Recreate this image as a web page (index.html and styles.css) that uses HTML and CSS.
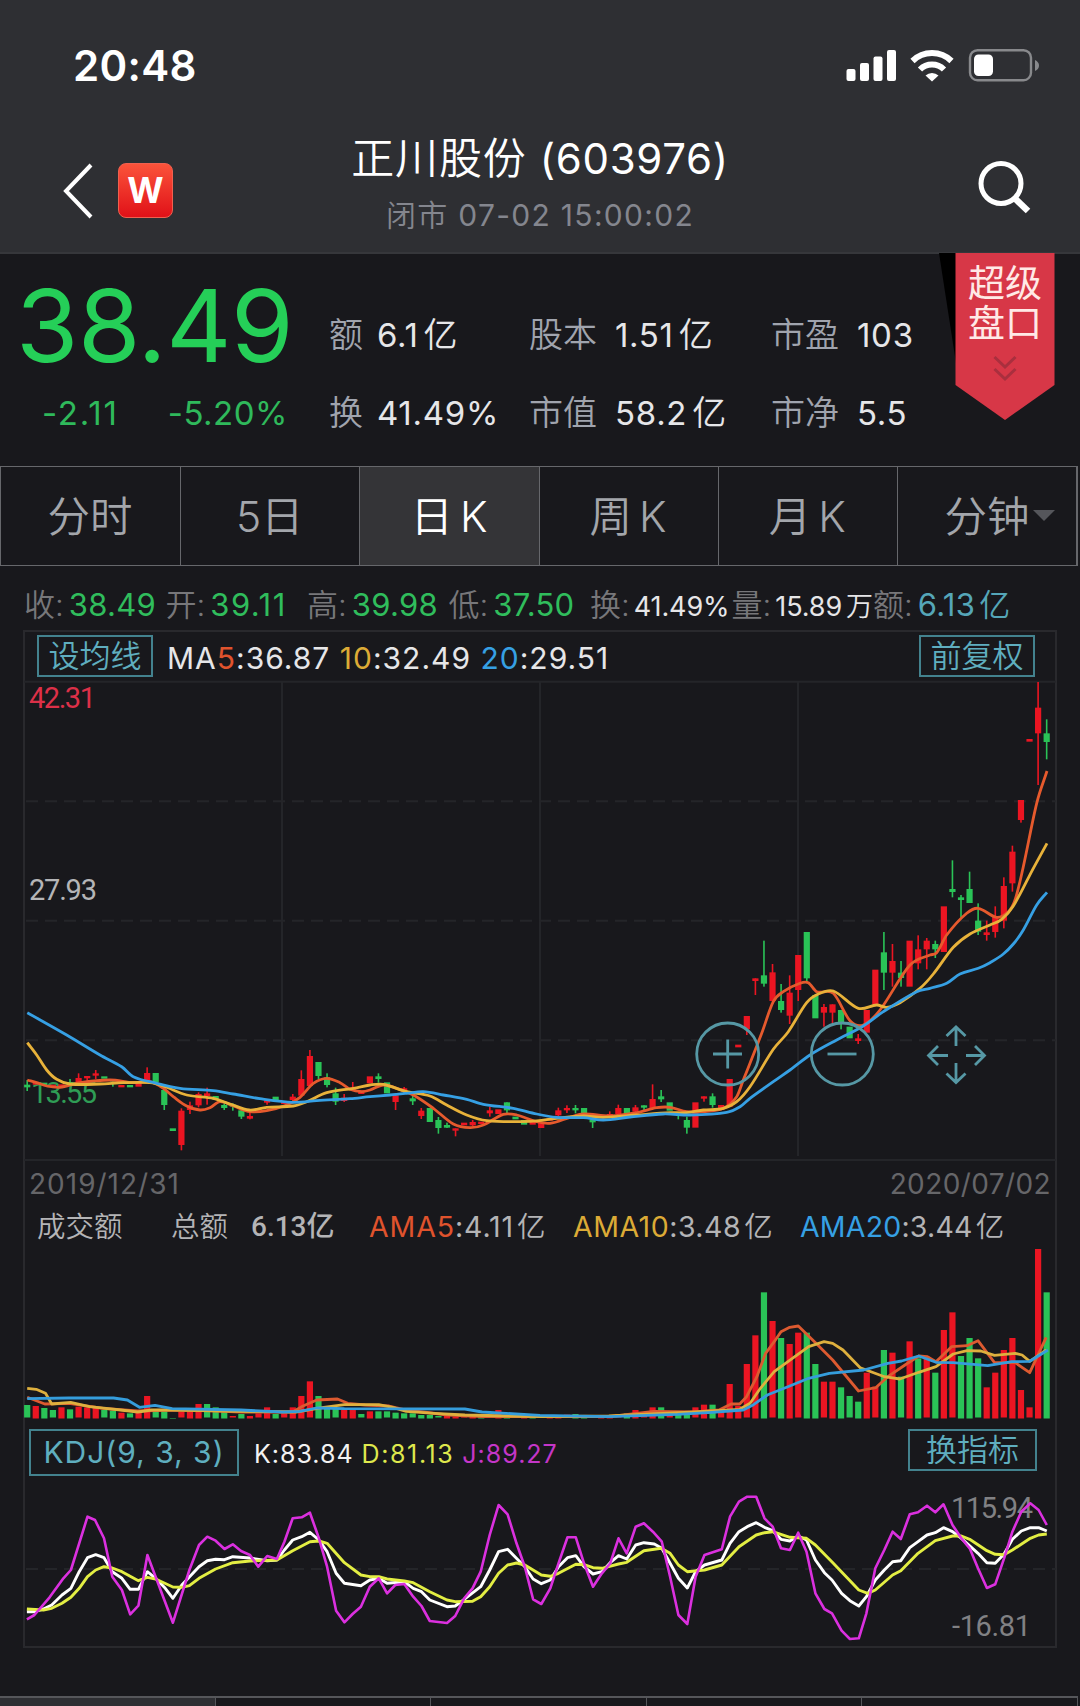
FILE: index.html
```html
<!DOCTYPE html>
<html lang="zh-CN">
<head>
<meta charset="utf-8">
<title>正川股份 (603976)</title>
<link rel="stylesheet" href="styles.css">
</head>
<body>
<div class="screen">
  <header class="top">
    <div class="status">
      <span class="clock">20:48</span>
      <svg class="status-icons" width="194" height="34" viewBox="846 48 194 34">
        <g fill="#fff">
          <rect x="846.5" y="69" width="9" height="12" rx="2"/>
          <rect x="860" y="63" width="9" height="18" rx="2"/>
          <rect x="873.5" y="56.5" width="9" height="24.5" rx="2"/>
          <rect x="887" y="50" width="9" height="31" rx="2"/>
          <path d="M925.500 75.500a9.500 9.500 0 0 1 13 0L932 81.500z"/>
        </g>
        <g fill="none" stroke="#fff" stroke-width="6">
          <path d="M912.5 61a28 28 0 0 1 39 0"/>
          <path d="M920 69.500a17 17 0 0 1 24 0"/>
        </g>
        <rect x="970" y="50.2" width="61" height="30" rx="7.5" fill="none" stroke="#88898c" stroke-width="2.4"/>
        <rect x="974" y="54.5" width="19" height="21.5" rx="4.5" fill="#fff"/>
        <path d="M1035 60q4 2 4 5.500t-4 5.500z" fill="#88898c"/>
      </svg>
    </div>
    <div class="nav">
      <div class="nav-left">
        <svg width="32" height="58" viewBox="0 0 32 58"><path d="M29 3 4 29 29 55" fill="none" stroke="#fff" stroke-width="4"/></svg>
        <span class="logo">W</span>
      </div>
      <div class="heading">
        <h1>正川股份 <span>(603976)</span></h1>
        <p>闭市 <span>07-02 15:00:02</span></p>
      </div>
      <svg class="search" width="54" height="56" viewBox="0 0 54 56"><g fill="none" stroke="#fff" stroke-width="5"><circle cx="23" cy="23.500" r="20"/><path d="M36.500 38 50 51" stroke-width="6.500"/></g></svg>
    </div>
  </header>

  <section class="quote">
    <div class="price">
      <strong>38.49</strong>
      <div class="change"><span class="ones">-2.11</span><span>-5.20%</span></div>
    </div>
    <dl class="stats">
      <dt>额</dt><dd>6.1<i>亿</i></dd><dt>股本</dt><dd>1.51<i>亿</i></dd><dt>市盈</dt><dd>103</dd>
      <dt>换</dt><dd>41.49%</dd><dt>市值</dt><dd>58.2<i>亿</i></dd><dt>市净</dt><dd>5.5</dd>
    </dl>
    <div class="ribbon">
      <svg width="116" height="168" viewBox="0 0 116 168">
        <path d="M0 0H17V110z" fill="#000"/>
        <path d="M16.500 0H115.500V132L66 167 16.500 132z" fill="#d73747"/>
        <path d="m55.500 104 10.500 10 10.500-10m-21 12 10.500 10 10.500-10" fill="none" stroke="#a92f3e" stroke-width="3"/>
      </svg>
      <span>超级<br>盘口</span>
    </div>
  </section>

  <nav class="tabs">
    <a>分时</a><a>5日</a><a class="on">日<b>K</b></a><a>周<b>K</b></a><a>月<b>K</b></a><a class="more">分钟</a>
  </nav>

  <div class="ohlc">
    <div>收:<b>38.49</b></div><div>开:<b class="ones">39.11</b></div><div>高:<b>39.98</b></div><div>低:<b>37.50</b></div>
    <div>换:<b class="sm">41.49%</b></div><div>量:<b class="sm">15.89<i>万</i></b></div><div>额:<b class="teal">6.13<i>亿</i></b></div>
  </div>

  <section class="chart">
    <div class="bar ma">
      <button>设均线</button>
      <span class="legend">MA<em class="c5">5</em>:36.87 <em class="c10">10</em>:32.49 <em class="c20">20</em>:29.51</span>
      <button class="right">前复权</button>
    </div>
    <svg id="price" class="pane price-pane" width="1032" height="482" viewBox="24 680 1032 482">
      <g class="grid">
        <path d="M24 681.800H1056M24 1160H1056M282 682V1156M540 682V1156M798 682V1156"/>
        <path class="dash" d="M26 801.300H1056M26 920.700H1056M26 1040.200H1056"/>
      </g>
      <g class="axis">
        <text x="29" y="708" textLength="67" fill="#dc3048">42.31</text>
        <text x="29" y="900" textLength="68" fill="#b5b5b7">27.93</text>
        <text x="31" y="1103" textLength="66" fill="#2f9d55">13.55</text>
      </g>
      <g class="plot"></g>
      <g class="controls">
        <circle cx="727.700" cy="1054" r="31"/><path d="M713 1054H742M727.700 1039.500V1068.500"/>
        <circle cx="842.300" cy="1054" r="31"/><path d="M827.500 1054H856.500"/>
        <path d="M956 1046V1027M946.500 1036 956 1027 965.500 1036M956 1063V1082M946.500 1073.500 956 1082.500 965.500 1073.500M948 1055.500H929M938 1046 928.500 1055.500 938 1065M966 1055.500H985M975 1046 984.500 1055.500 975 1065"/>
      </g>
    </svg>
    <div class="dates"><span>2019/12/31</span><span>2020/07/02</span></div>
    <div class="bar turnover">
      <span>成交额</span><span>总额</span><b>6.13亿</b>
      <span><em class="c5">AMA5</em>:4.11<i>亿</i></span><span><em class="c10">AMA10</em>:3.48<i>亿</i></span><span><em class="c20">AMA20</em>:3.44<i>亿</i></span>
    </div>
    <svg id="volume" class="pane" width="1032" height="174" viewBox="24 1247 1032 174"><g class="plot"></g></svg>
    <div class="bar kdj">
      <button class="wide">KDJ(9, 3, 3)</button>
      <span class="legend"><em class="k">K:83.84</em><em class="d">D:81.13</em><em class="j">J:89.27</em></span>
      <button class="right">换指标</button>
    </div>
    <svg id="kdj" class="pane" width="1032" height="166" viewBox="24 1480 1032 166">
      <g class="grid"><path class="dash" d="M26 1569H1056"/></g>
      <g class="axis">
        <text x="951" y="1518" textLength="82" fill="#818184">115.94</text>
        <text x="952" y="1636" textLength="79" fill="#818184">-16.81</text>
      </g>
      <g class="plot"></g>
    </svg>
  </section>

  <div class="bottom-tabs"><i class="on"></i><i></i><i></i><i></i><i></i></div>
</div>
<script src="chart.js"></script>
</body>
</html>
```
FILE: styles.css
```css
* { box-sizing: border-box; margin: 0; padding: 0; }
body { background: #18181c; }
i, em { font-style: normal; }
i { font-weight: 350; }
.screen { width: 1080px; height: 1706px; overflow: hidden; display: flex; flex-direction: column; background: #18181c; color: #e6e6e8; font-family: Inter, "Noto Sans CJK SC", sans-serif; font-weight: 350; line-height: 1; white-space: nowrap; }
.screen > * { flex: none; }

.top { height: 254px; background: #2e2f33; border-bottom: 2px solid #36373b; color: #fff; }
.status { height: 130px; padding: 0 40px 0 73px; display: flex; justify-content: space-between; align-items: center; }
.clock { font-size: 42px; font-weight: 600; letter-spacing: 0.3px; padding-top: 1px; }
.status-icons { display: block; }
.nav { height: 122px; display: grid; grid-template-columns: 240px 1fr 240px; }
.nav-left { display: flex; gap: 24px; padding: 32px 0 0 62px; }
.nav-left svg { display: block; }
.logo { width: 55px; height: 55px; margin-top: 1px; border-radius: 8px; border: 1px solid #f0604f; background: linear-gradient(#fb533a, #e01118); font-size: 35px; font-weight: 700; line-height: 53px; text-align: center; }
.heading { text-align: center; }
.heading h1 { font-size: 43px; font-weight: 350; line-height: 56px; letter-spacing: 0.9px; }
.heading h1 span { font-size: 42px; font-weight: 400; letter-spacing: 0.7px; }
.heading p { font-size: 30px; line-height: 56px; color: #84868e; letter-spacing: 1.3px; }
.heading p span { font-weight: 400; }
.search { margin: 30px 0 0 138px; }

.quote { height: 212px; display: grid; grid-template-columns: 329px 610px 116px; }
.price { color: #25cf58; padding: 21px 0 0 16px; }
.price strong { display: block; font-size: 101px; font-weight: 400; line-height: 101px; letter-spacing: -0.5px; }
.change { display: flex; gap: 49px; padding: 20px 0 0 26px; font-size: 33px; font-weight: 400; line-height: 34px; letter-spacing: 0.5px; color: #2fb95b; }
.change .ones { letter-spacing: 1.8px; }
.stats { display: grid; grid-template-columns: 48px 152px 86px 156px 86px 82px; grid-template-rows: 78px 78px; align-items: center; padding-top: 42px; font-size: 33px; font-weight: 400; letter-spacing: 0.7px; }
.stats dt { font-size: 34px; font-weight: 350; letter-spacing: 0; color: #a0a4ae; }
.stats i { font-size: 34px; margin-left: 5px; }
.ribbon { position: relative; margin-top: -1px; }
.ribbon svg { display: block; }
.ribbon span { position: absolute; left: 29px; top: 11px; font-size: 37px; line-height: 40px; font-weight: 400; color: #ffe9e6; }

.tabs { width: 1078px; height: 100px; display: grid; grid-template-columns: repeat(6, 1fr); border: 1px solid #66676b; border-right-width: 2px; }
.tabs a { display: flex; align-items: center; justify-content: center; font-size: 42.5px; color: #a3a6ab; padding: 2px 1px 0 0; }
.tabs a + a { border-left: 1px solid #66676b; }
.tabs b { font-weight: inherit; margin-left: 7px; }
.tabs .on { background: #343437; color: #fff; }
.tabs .more::after { content: ""; border: 11px solid transparent; border-bottom: 0; border-top-color: #55565b; margin: -4px -27px 0 4px; }

.ohlc { height: 64px; padding: 13px 0 0 24px; display: grid; grid-template-columns: repeat(7, 141.5px); align-items: center; font-size: 31px; color: #77777a; }
.ohlc b { font-weight: 400; color: #30bd5c; margin-left: 5px; letter-spacing: 0.3px; }
.ohlc .ones { letter-spacing: 1.5px; }
.ohlc .sm { font-size: 27px; color: #e6e6e8; margin-left: 4px; letter-spacing: -0.1px; }
.ohlc .teal { color: #55a6b8; }
.ohlc i { margin-left: 4px; letter-spacing: 0; }

.chart { width: 1034px; height: 1018px; margin-left: 23px; border: 2px solid #29292d; display: flex; flex-direction: column; }
.bar { display: flex; align-items: center; }
button { height: 42px; width: 116px; background: none; border: 2px solid #43828e; color: #5faebf; font: 350 31px/38px Inter, "Noto Sans CJK SC", sans-serif; text-align: center; }
.right { margin-left: auto; }
.ma { height: 48px; padding: 0 20px 0 12px; }
.ma .legend { font-size: 30px; font-weight: 400; margin: 4px 0 0 14px; letter-spacing: 1px; }
.c5 { color: #e0532d; }
.c10 { color: #dcab36; }
.c20 { color: #36a0e4; }
.pane { display: block; flex: none; margin-left: -1px; }
.dates { height: 44px; display: flex; justify-content: space-between; align-items: center; padding: 0 4px 0 4px; font-size: 28px; font-weight: 400; letter-spacing: 0.4px; color: #666669; }
.dates span:first-child { letter-spacing: 1px; }
.turnover { height: 41px; padding: 1px 0 0 12px; font-size: 28.5px; color: #b4b4b6; }
.turnover span { font-weight: 400; }
.turnover span:nth-child(1) { width: 134px; font-weight: 350; }
.turnover span:nth-child(2) { width: 80px; font-weight: 350; }
.turnover b { width: 118px; font: 500 28px/28px Roboto, "Noto Sans CJK SC", sans-serif; }
.turnover span:nth-child(4) { width: 204px; letter-spacing: 0.9px; }
.turnover span:nth-child(5) { width: 227px; letter-spacing: 0.5px; }
.turnover span:nth-child(6) { letter-spacing: 0.2px; }
.turnover i { margin-left: 3px; }
.kdj { height: 59px; padding: 8px 18px 0 4px; align-items: flex-start; }
.kdj .wide { width: 210px; height: 47px; line-height: 43px; font-size: 30px; font-weight: 400; letter-spacing: 1px; }
.kdj button.right { width: 129px; }
.kdj .legend { display: flex; gap: 8px; margin: 13px 0 0 15px; font-size: 25px; font-weight: 400; letter-spacing: 1px; }
.k { color: #f2f2f2; }
.d { color: #dfe84d; letter-spacing: 1.6px; }
.j { color: #c436c8; }

.grid path { fill: none; stroke: #242529; stroke-width: 2; }
.grid .dash { stroke-dasharray: 12 7; }
.axis text { font: 400 29px Roboto, sans-serif; }
.controls { fill: none; stroke: #5698a5; stroke-width: 2.8; }
.up { fill: #eb1522; }
.down { fill: #2ac357; }
.line { fill: none; stroke-linejoin: round; }

.bottom-tabs { width: 1078px; height: 20px; margin-top: 48px; display: grid; grid-template-columns: repeat(5, 1fr); border-top: 2px solid #55565a; }
.bottom-tabs i { border-right: 1px solid #55565a; }
.bottom-tabs .on { background: #2e2f33; }
```
FILE: chart.js
```js
const NS = 'http://www.w3.org/2000/svg';
const FIRST_X = 27.2;
const PITCH = 8.567;
const barX = i => FIRST_X + PITCH * i;

function add(parent, tag, attrs) {
  const node = document.createElementNS(NS, tag);
  for (const key in attrs) node.setAttribute(key, attrs[key]);
  parent.appendChild(node);
}

// Each candle: direction, body top, body bottom, then optional high and low.
// Heights are thirds of a pixel below the section's base line.
const early = `g314 322 300 333,r308 314,g308 316,r314 322,r313 320,g306 316 297 318,r294 306 280 308,r288 295 288 302,r280 287 270 297,g289 296,g300 305 298 320,r315 322,g315 322,r308 320,r279 300 262 300,g279 307,g330 375 325 390,g445 453,r392 495 385 511,r376 390 365 402,r342 376 337 382,r340 348 323 374,g348 360,g375 384 370 390,g374 380 370 392,g391 410 390 417,r408 416 395 418,r385 392,r361 368 361 374,g350 362,r366 372,r350 360 342 364,r297 347 271 350,r228 318 210 320,g246 288 246 297,g292 315 280 322,g340 365 323 375,r353 363 342 366,r322 330 306 332,r332 342,r289 310,g289 297 280 308,g307 340,r346 366 340 390,r325 335 321 340,g355 364 345 375,r392 408 384 417,g384 426,g420 444 411 461,g435 443 428 444,r445 452 445 469,r428 436,r426 436 420 438,r425 432,r391 400 380 410,r388 402,g367 391 367 400,g410 418,g420 434,r426 434,r428 444,r415 422,r391 406 383 410,r384 391 376 399,g384 391 375 400,g384 403,g420 427 418 444,r405 412,r402 408 394 410,r384 402 374 404,g384 402,r382 395 375 396,g376 383 376 390,r357 385 313 386,g349 358 330 366,g367 392,g400 405 398 418,g420 443 410 461,r367 443,r349 356 349 365,g349 375 340 383,r375 390,r297 380,r194 202`;
const late = `r1038 1078 1038 1095,r925 933 925 975,g916 941 812 950,r907 993 882 995,g993 1020 942 1028,r968 1037 916 1062,r855 960 855 993,g786 925 786 935,g975 1045,r1011 1028 1002 1070,r1003 1028 1003 1065,g1020 1062 1020 1078,g1070 1105,r1105 1113 1092 1122,r1020 1088,r899 1003,g847 908 786 960,r873 908 822 950,g908 924 873 950,r812 950,r838 880 796 898,r812 838 804 898,g822 838 812 864,r709 846,g657 666 571 682,g682 690 675 742,g657 699 605 699,g752 785 700 795,r787 795 752 812,r738 786 709 803,r648 752 622 775,r545 640 527 665,r390 450 390 458,r207 215,r113 190 36 345,g190 216 148 268`;

function candles(plot, text, offset, base) {
  text.split(',').forEach((item, n) => {
    const cls = item[0] === 'r' ? 'up' : 'down';
    const [top, bottom, high, low] = item.slice(1).split(' ').map(v => base + v / 3);
    const x = barX(offset + n);
    add(plot, 'rect', { class: cls, x: x - 3.1, y: top, width: 6.2, height: bottom - top });
    if (high) add(plot, 'rect', { class: cls, x: x - 0.8, y: high, width: 1.6, height: low - high });
  });
}

// Sections are [originX, originY, scaleX, "x y x y ..."]; points join into one line.
function line(plot, color, sections, smooth, width) {
  const p = [];
  for (const [ox, oy, sx, text] of sections) {
    const v = text.trim().split(/[\s,]+/).map(Number);
    for (let i = 0; i < v.length; i += 2) p.push([ox + v[i] / sx, oy + v[i + 1] / 3]);
  }
  let d = 'M' + p[0].map(n => n.toFixed(1)).join(' ');
  for (let i = 1; i < p.length; i++) {
    if (!smooth) { d += 'L' + p[i].map(n => n.toFixed(1)).join(' '); continue; }
    const a = p[i - 2] || p[i - 1], b = p[i - 1], c = p[i], e = p[i + 1] || c;
    const s = (c[0] - b[0]) / 3;
    const m1 = (c[1] - a[1]) / (c[0] - a[0]), m2 = (e[1] - b[1]) / (e[0] - b[0]);
    d += 'C' + [b[0] + s, b[1] + s * m1, c[0] - s, c[1] - s * m2, c[0], c[1]].map(n => n.toFixed(1)).join(' ');
  }
  add(plot, 'path', { class: 'line', d, stroke: color, 'stroke-width': width || 2.8 });
}

const price = document.querySelector('#price .plot');
candles(price, early, 0, 980);
candles(price, late, 84, 670);
const A = [0, 980, 3], B = [370, 980, 3], C = [700, 670, 3];
line(price, '#e65a2d', [
  [...A, '82,300 110,308 140,318 180,322 240,308 330,300 400,308 450,305 490,325 520,350 560,378 600,390 630,383 660,365 700,378 750,395 800,392 860,375 900,352 940,310 980,295 1020,308 1050,328 1085,335'],
  [...B, '0,330 40,315 80,325 130,345 190,385 250,432 300,443 340,435 400,403 440,405 500,425 540,430 600,412 640,402 720,408 800,398 860,383 900,382 950,395 1000,395 1060,385 1100,350 1120,300'],
  [...C, '150,1180 185,1090 220,995 250,965 300,940 325,938 350,965 400,970 450,1052 490,1065 540,1020 630,885 690,855 710,848 740,795 800,730 835,715 890,742 925,725 945,690 970,590 1010,400 1041,303']
], true);
line(price, '#e8b23a', [
  [...A, '82,188 110,225 140,270 170,298 210,312 300,312 370,308 450,308 490,318 560,345 640,355 690,372 748,390 800,382 880,378 920,365 980,338 1060,325'],
  [...B, '0,315 40,313 110,335 180,348 230,375 290,405 350,422 480,424 560,415 640,408 700,412 800,405 900,398 950,398 1000,390 1060,385 1100,365'],
  [...C, '150,1250 220,1138 265,1085 320,998 355,972 400,963 475,1015 530,1005 560,1012 600,998 660,955 700,912 760,832 810,792 870,765 905,748 940,708 1000,595 1041,520']
], true);
line(price, '#36a0e4', [
  [...A, '82,98 200,165 300,225 365,260 400,290 470,310 540,325 640,332 700,342 780,356 880,367 950,362 1050,356'],
  [...B, '0,350 60,345 110,340 160,335 220,345 290,358 340,373 430,385 500,402 560,412 640,413 700,420 780,411 880,402 960,405 1070,397 1110,380'],
  [...C, '150,1285 220,1235 270,1200 330,1155 410,1110 490,1068 550,1025 650,965 690,955 740,940 780,912 835,895 870,878 910,852 940,822 970,780 1010,705 1041,667']
], true);

const volume = document.querySelector('#volume .plot');
const bars = 'g615 r618 g624 g630 r622 g628 r620 r622 r622 g630 g632 r638 g640 r636 r588 g630 g634 g654 r636 r634 r612 g612 g622 g634 r648 g642 r648 r640 r622 g642 r640 r622 r588 r544 g588 g624 g624 r630 r628 g642 r634 g634 g634 g638 g640 g640 g645 g645 g648 r648 r650 r650 r648 g650 r650 r630 g648 g648 r650 g650 r650 r648 r648 r644 g642 g648 g650 r650 r650 r642 g640 r630 r642 r622 g622 r634 g644 g640 r622 r614 g614 r636 r552 r618 r492 r406 g277 r363 g414 r432 r398 g398 g492 r545 r545 g562 g588 g605 r518 r560 g450 r458 g530 r424 g475 r470 g518 r390 r337 g468 g414 g475 r562 r518 r450 r414 r570 r622 r147 g277';
bars.split(' ').forEach((item, i) => {
  const top = 1200 + item.slice(1) / 3;
  add(volume, 'rect', { class: item[0] === 'r' ? 'up' : 'down', x: barX(i) - 3.1, y: top, width: 6.2, height: (i % 3 ? 1418 : 1417) + 0.5 - top });
});
const V = [0, 1200, 2.904], W = [540, 1200, 2.904];
line(volume, '#dd5a30', [
  [...V, '79,592 130,612 200,610 300,625 400,633 500,630 600,632 700,636 850,636 880,618 920,600 980,597 1010,610 1060,615 1130,618 1180,630 1300,645 1400,650'],
  [...W, '0,650 200,650 330,634 450,636 520,630 555,612 580,612 600,590 630,530 655,460 680,425 700,395 725,382 750,378 800,428 850,480 925,573 975,563 1010,530 1060,495 1100,468 1125,470 1150,485 1195,440 1240,437 1272,422 1320,488 1380,488 1422,518 1470,412']
], false);
line(volume, '#deb03e', [
  [...V, '79,565 105,568 132,580 150,612 205,607 260,620 350,630 400,636 440,630 500,630 700,634 860,636 940,622 1000,614 1100,614 1140,622 1180,634 1260,640 1350,645'],
  [...W, '0,650 200,648 450,636 580,628 610,610 640,565 680,515 740,470 780,440 825,425 850,430 880,450 930,503 1000,530 1045,537 1100,517 1150,500 1200,462 1240,452 1280,453 1320,466 1380,460 1400,465 1422,484 1470,450']
], false);
line(volume, '#359ddc', [
  [...V, '79,596 200,594 330,594 370,600 405,622 450,616 500,626 700,630 820,636 870,634 920,624 1000,626 1350,627 1400,636'],
  [...W, '0,646 200,650 400,643 500,637 590,630 620,614 660,585 720,560 780,535 840,520 940,510 1010,490 1050,483 1100,468 1150,487 1200,488 1300,497 1370,485 1422,484 1475,450']
], false);

const kdj = document.querySelector('#kdj .plot');
const K = [0, 1460, 1.452];
line(kdj, '#fff', [[...K, '39,455 50,455 63,447 75,435 90,405 103,385 115,335 127,293 139,284 151,293 163,335 177,355 189,388 201,388 214,335 226,355 240,385 251,415 264,375 289,320 301,302 313,298 326,299 338,290 363,294 388,302 402,300 413,270 425,240 438,230 450,217 463,240 475,275 488,340 500,370 524,377 537,360 550,355 562,370 587,365 600,385 612,395 624,420 649,440 661,438 674,418 698,380 711,330 724,275 737,268 762,320 774,357 786,371 799,360 811,320 824,293 836,287 848,320 861,342 874,335 886,308 898,287 910,297 923,255 935,248 950,252 961,265 973,310 985,355 998,384 1010,335 1023,315 1048,300 1060,250 1073,215 1085,200 1098,188 1110,202 1122,212 1134,238 1147,243 1159,228 1171,240 1184,300 1197,338 1208,360 1222,400 1234,422 1247,438 1258,410 1271,360 1284,330 1296,305 1308,302 1321,263 1333,245 1346,225 1358,218 1370,203 1383,215 1396,235 1420,280 1433,308 1445,310 1458,282 1470,238 1483,213 1496,203 1508,203 1520,213']], false, 2.9);
line(kdj, '#e3ee43', [[...K, '39,447 63,450 75,445 90,430 103,412 115,385 127,350 139,330 151,320 163,324 177,335 201,362 214,352 226,357 251,381 264,382 275,377 289,355 313,327 338,308 363,303 402,300 425,272 450,245 463,243 475,250 500,308 524,345 537,350 550,350 562,357 587,363 600,368 624,395 649,420 661,425 686,424 698,410 711,380 724,340 737,315 750,309 762,315 786,345 799,349 811,340 836,313 848,314 861,323 874,325 898,312 910,307 935,272 960,265 973,280 985,315 998,335 1023,330 1048,315 1073,260 1098,225 1110,218 1122,215 1147,232 1171,235 1184,255 1210,310 1247,390 1260,400 1271,390 1296,345 1308,332 1333,280 1358,242 1383,228 1396,228 1408,238 1433,272 1445,283 1458,284 1470,270 1496,235 1508,225 1520,222']], false, 2.9);
line(kdj, '#db30df', [[...K, '39,478 50,465 72,412 92,355 103,330 127,170 138,180 151,235 163,350 177,390 189,463 201,437 214,285 226,350 251,488 275,330 289,255 301,230 313,242 326,267 338,253 350,273 363,285 375,320 388,288 402,297 413,245 425,175 438,172 450,158 463,235 475,320 488,452 500,487 512,462 524,440 537,380 550,355 562,400 574,375 587,372 600,410 612,438 624,483 649,489 661,468 674,415 686,385 698,335 711,225 724,135 737,163 750,250 762,320 774,418 786,432 799,385 811,310 824,232 836,232 848,310 861,380 874,340 886,310 898,235 910,280 923,200 935,190 948,215 961,245 973,350 985,465 998,492 1010,350 1023,285 1048,268 1060,170 1073,125 1085,110 1098,110 1110,175 1122,200 1134,265 1147,270 1159,218 1171,275 1184,400 1197,447 1208,460 1222,512 1234,537 1247,535 1258,460 1271,325 1284,270 1296,215 1308,237 1321,163 1333,157 1346,137 1358,157 1370,133 1383,195 1396,235 1408,265 1420,325 1433,384 1445,373 1458,295 1470,215 1483,155 1496,130 1508,150 1520,195']], false, 2.6);
```
